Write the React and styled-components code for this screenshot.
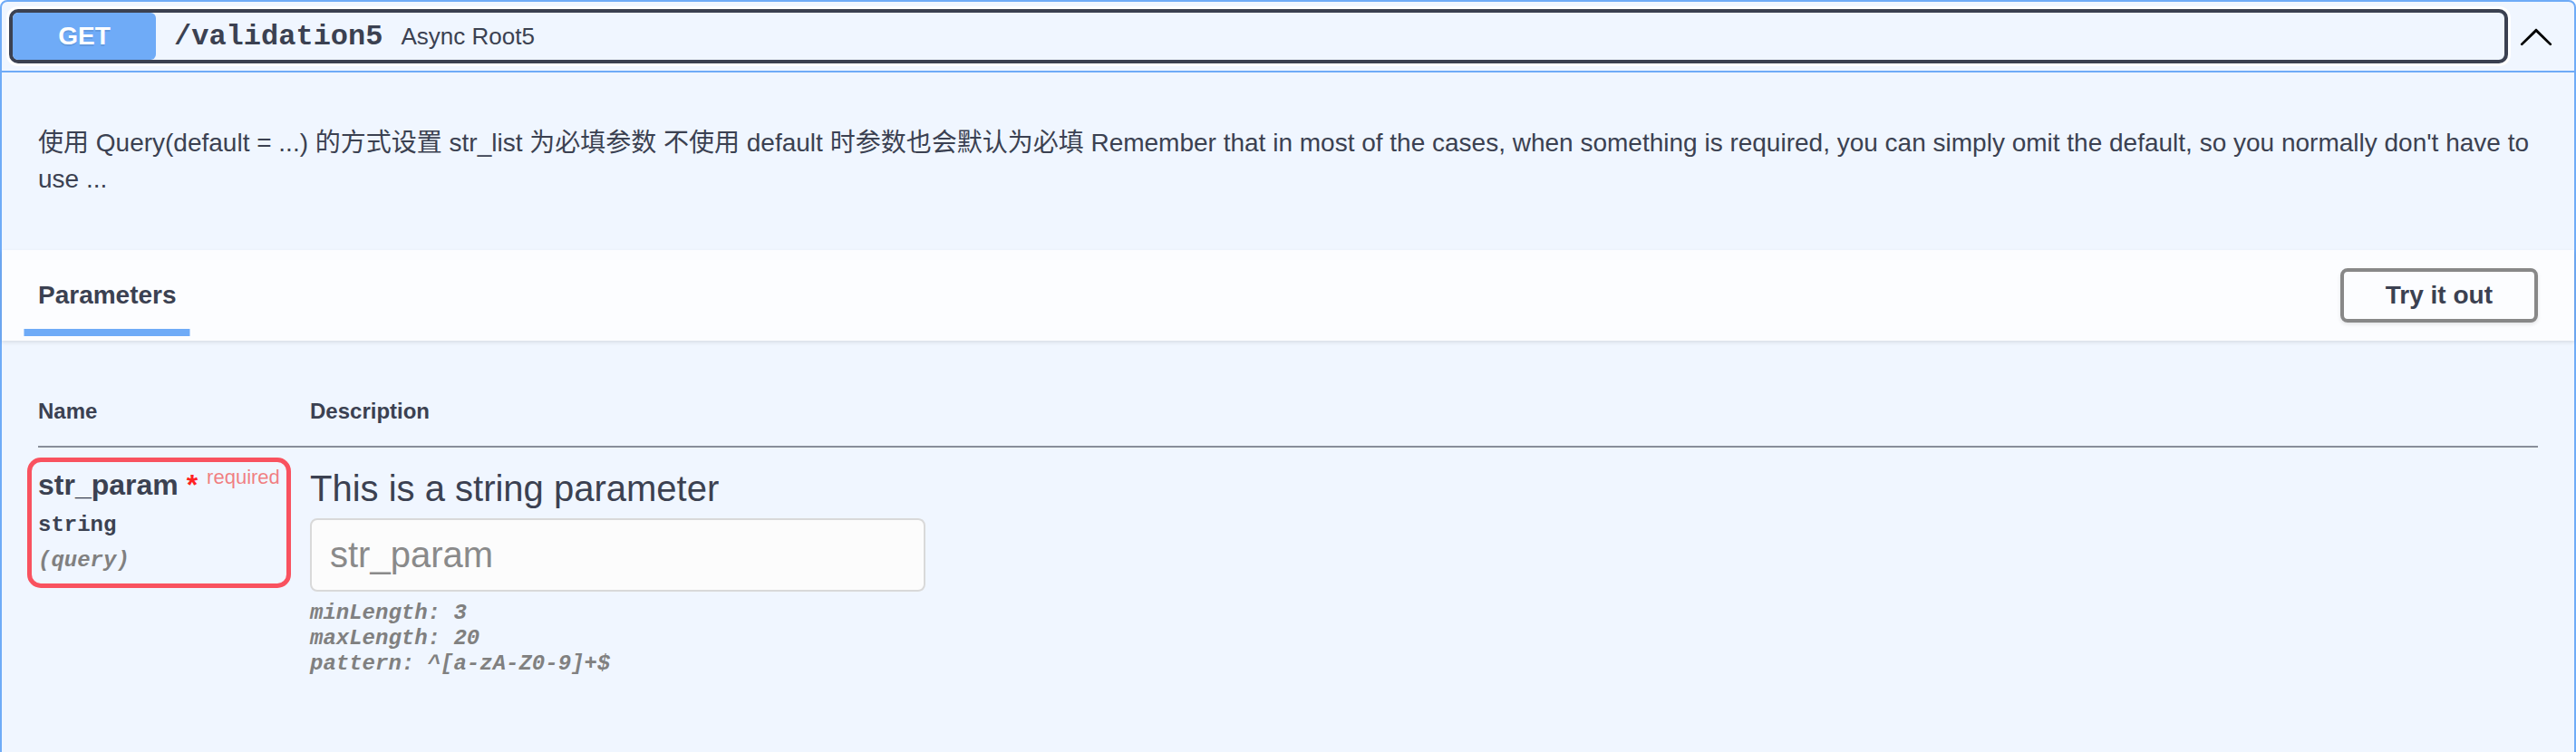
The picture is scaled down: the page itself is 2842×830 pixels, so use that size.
import React from 'react'
import styled, { createGlobalStyle } from 'styled-components'

const GlobalStyle = createGlobalStyle`
  html, body {
    margin: 0;
    padding: 0;
    background: #fff;
  }
  body {
    font-family: "Liberation Sans", "Noto Sans CJK SC", sans-serif;
    color: #3b4151;
  }
`

const blue = '#6fabf7'
const ink = '#3b4151'
const sans = '"Liberation Sans", "Noto Sans CJK SC", sans-serif'
const mono = '"Liberation Mono", "DejaVu Sans Mono", monospace'

const OpBlock = styled.div`
  border: 2px solid ${blue};
  border-radius: 8px;
  background: #f0f6ff;
`

const Summary = styled.div`
  display: flex;
  align-items: center;
  padding: 8px;
  border-bottom: 2px solid ${blue};
`

const SummaryControl = styled.div`
  flex: 1;
  display: flex;
  align-items: center;
  border: 4px solid ${ink};
  border-radius: 10px;
  box-shadow: 0 0 0 3px #fff;
`

const Method = styled.span`
  width: 158px;
  height: 52px;
  display: flex;
  align-items: center;
  justify-content: center;
  background: ${blue};
  border-radius: 6px;
  color: #fff;
  font-family: ${sans};
  font-size: 28px;
  font-weight: 700;
  text-shadow: 0 2px 0 rgba(0, 0, 0, 0.1);
`

const Path = styled.span`
  padding: 0 20px;
  font-family: ${mono};
  font-size: 32px;
  font-weight: 700;
  color: ${ink};
`

const SummaryText = styled.span`
  font-family: ${sans};
  font-size: 26px;
  color: ${ink};
`

const ArrowButton = styled.button`
  display: flex;
  align-items: center;
  padding: 0 14px 0 11px;
  border: none;
  background: none;
`

const DescriptionWrapper = styled.div`
  padding: 30px 40px;

  p {
    margin: 28px 0;
    font-family: ${sans};
    font-size: 28px;
    line-height: 40px;
    color: ${ink};
  }
`

const SectionHeader = styled.div`
  display: flex;
  align-items: center;
  justify-content: space-between;
  min-height: 100px;
  box-sizing: border-box;
  padding: 16px 40px;
  background: rgba(255, 255, 255, 0.8);
  box-shadow: 0 2px 4px rgba(0, 0, 0, 0.1);
`

const TabTitle = styled.h4`
  margin: 0;
  font-family: ${sans};
  font-size: 28px;
  font-weight: 700;
  color: ${ink};

  span {
    position: relative;
  }
  span::after {
    content: '';
    position: absolute;
    left: 50%;
    bottom: -30px;
    width: 120%;
    height: 8px;
    transform: translateX(-50%);
    background: ${blue};
  }
`

const TryButton = styled.button`
  padding: 10px 46px;
  border: 4px solid #888;
  border-radius: 8px;
  background: transparent;
  box-shadow: 0 2px 4px rgba(0, 0, 0, 0.1);
  font-family: ${sans};
  font-size: 28px;
  font-weight: 700;
  color: ${ink};
`

const TableContainer = styled.div`
  padding: 40px 40px 120px;
`

const Table = styled.table`
  width: 100%;
  border-collapse: collapse;
`

const Th = styled.th`
  width: ${(p) => p.$width || 'auto'};
  padding: 24px 0;
  text-align: left;
  font-family: ${sans};
  font-size: 24px;
  line-height: 28px;
  font-weight: 700;
  color: ${ink};
  border-bottom: 2px solid rgba(59, 65, 81, 0.35);
`

const Td = styled.td`
  padding: 23px 0 20px;
  vertical-align: top;
`

const NameBlock = styled.div`
  display: inline-block;
  padding: 0 0 5px 0;
  outline: 5px solid #f9525f;
  outline-offset: 7px;
  border-radius: 3px;
`

const ParamName = styled.div`
  font-family: ${sans};
  font-size: 32px;
  font-weight: 700;
  color: ${ink};
  white-space: nowrap;

  span {
    color: #f22;
  }
  &::after {
    content: 'required';
    position: relative;
    top: -12px;
    padding-left: 10px;
    font-size: 22px;
    font-weight: 400;
    color: rgba(240, 80, 80, 0.72);
  }
`

const ParamType = styled.div`
  padding: 12px 0;
  font-family: ${mono};
  font-size: 24px;
  font-weight: 700;
  color: ${ink};
`

const ParamIn = styled.div`
  font-family: ${mono};
  font-size: 24px;
  font-style: italic;
  font-weight: 700;
  color: #808080;
`

const ParamDesc = styled.p`
  margin: 0;
  font-family: ${sans};
  font-size: 40px;
  color: ${ink};
`

const Input = styled.input`
  display: block;
  width: 679px;
  box-sizing: border-box;
  margin: 10px 0;
  padding: 16px 20px;
  border: 2px solid #d9d9d9;
  border-radius: 8px;
  background: #fcfcfc;
  font-family: ${sans};
  font-size: 40px;
  color: ${ink};

  &::placeholder {
    color: #8a8a8a;
  }
`

const Constraint = styled.div`
  font-family: ${mono};
  font-size: 24px;
  line-height: 28px;
  font-style: italic;
  font-weight: 700;
  color: #808080;
`

const Chevron = () => (
  <svg width="40" height="40" viewBox="0 0 20 20" aria-hidden="true">
    <path
      fill="#000"
      d="M17.418 14.908c.272.268.709.268.979 0s.271-.701 0-.969l-7.908-7.83c-.27-.268-.707-.268-.979 0l-7.908 7.83c-.27.268-.27.701 0 .969.271.268.709.268.979 0L10 7.767l7.418 7.141z"
    />
  </svg>
)

const constraints = ['minLength: 3', 'maxLength: 20', 'pattern: ^[a-zA-Z0-9]+$']

export default function App() {
  return (
    <>
      <GlobalStyle />
      <OpBlock>
        <Summary>
          <SummaryControl>
            <Method>GET</Method>
            <Path>/validation5</Path>
            <SummaryText>Async Root5</SummaryText>
          </SummaryControl>
          <ArrowButton>
            <Chevron />
          </ArrowButton>
        </Summary>

        <DescriptionWrapper>
          <p>
            使用 Query(default = ...) 的方式设置 str_list 为必填参数 不使用 default 时参数也会默认为必填 Remember that in
            most of the cases, when something is required, you can simply omit the default, so you normally don't have
            to use ...
          </p>
        </DescriptionWrapper>

        <SectionHeader>
          <TabTitle>
            <span>Parameters</span>
          </TabTitle>
          <TryButton>Try it out</TryButton>
        </SectionHeader>

        <TableContainer>
          <Table>
            <thead>
              <tr>
                <Th $width="300px">Name</Th>
                <Th>Description</Th>
              </tr>
            </thead>
            <tbody>
              <tr>
                <Td>
                  <NameBlock>
                    <ParamName>
                      str_param<span>&nbsp;*</span>
                    </ParamName>
                    <ParamType>string</ParamType>
                    <ParamIn>(query)</ParamIn>
                  </NameBlock>
                </Td>
                <Td>
                  <ParamDesc>This is a string parameter</ParamDesc>
                  <Input type="text" placeholder="str_param" />
                  {constraints.map((c) => (
                    <Constraint key={c}>{c}</Constraint>
                  ))}
                </Td>
              </tr>
            </tbody>
          </Table>
        </TableContainer>
      </OpBlock>
    </>
  )
}
